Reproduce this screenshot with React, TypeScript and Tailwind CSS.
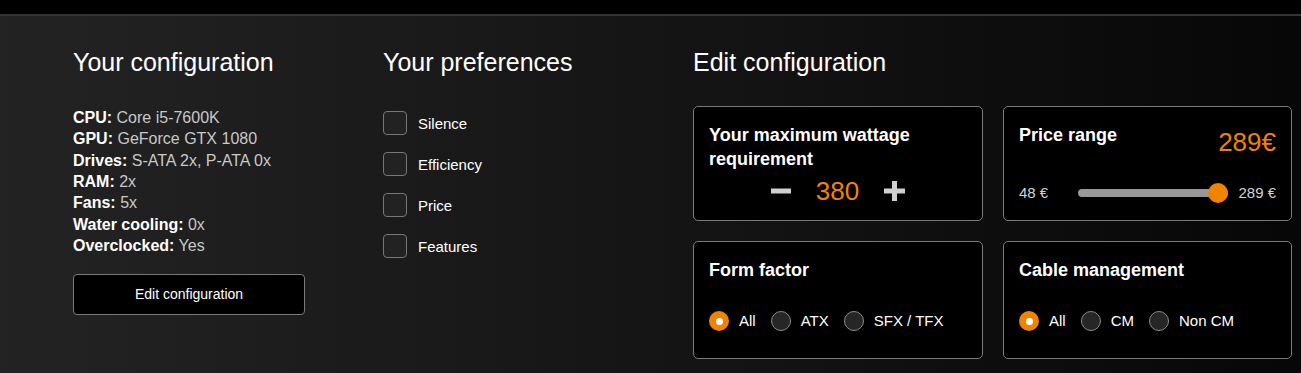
import React from "react";

const ORANGE = "#f08300";

function Radio({ checked }: { checked?: boolean }) {
  if (checked) {
    return (
      <span className="w-[20px] h-[20px] rounded-full bg-[#f08300] flex items-center justify-center shrink-0">
        <span className="w-[7px] h-[7px] rounded-full bg-white" />
      </span>
    );
  }
  return <span className="w-[20px] h-[20px] rounded-full bg-[#262626] border border-[#8a8a8a] shrink-0" />;
}

function RadioGroup({ options }: { options: string[] }) {
  return (
    <div className="flex items-center gap-[15px] h-[20px]">
      {options.map((o, i) => (
        <div key={o} className="flex items-center gap-[10px]">
          <Radio checked={i === 0} />
          <span className="text-[15px] leading-[20px] text-white">{o}</span>
        </div>
      ))}
    </div>
  );
}

export default function App() {
  const config: [string, string][] = [
    ["CPU:", "Core i5-7600K"],
    ["GPU:", "GeForce GTX 1080"],
    ["Drives:", "S-ATA 2x, P-ATA 0x"],
    ["RAM:", "2x"],
    ["Fans:", "5x"],
    ["Water cooling:", "0x"],
    ["Overclocked:", "Yes"],
  ];
  const prefs = ["Silence", "Efficiency", "Price", "Features"];

  return (
    <div className="min-h-[373px] w-full font-['Liberation_Sans',Arial,sans-serif] text-white bg-[linear-gradient(to_right,#232323,#070707)]">
      <div className="h-[14px] bg-black" />
      <div className="h-[2px] bg-[#333333]" />
      <div className="flex pl-[73px] pt-[32px]">
        {/* Left column */}
        <div className="w-[310px] shrink-0">
          <h2 className="text-[25px] leading-[28px] font-normal">Your configuration</h2>
          <ul className="mt-[31px] text-[16px] leading-[21.33px]">
            {config.map(([k, v]) => (
              <li key={k}>
                <span className="font-bold text-white">{k}</span>{" "}
                <span className="text-[#c8c8c8]">{v}</span>
              </li>
            ))}
          </ul>
          <button className="mt-[18px] w-[232px] h-[41px] bg-black border border-[#7a7a7a] rounded-[4px] text-[14px] text-white">
            Edit configuration
          </button>
        </div>

        {/* Middle column */}
        <div className="w-[310px] shrink-0">
          <h2 className="text-[25px] leading-[28px] font-normal">Your preferences</h2>
          <div className="mt-[35px] flex flex-col gap-[17px]">
            {prefs.map((p) => (
              <div key={p} className="flex items-center gap-[11px]">
                <span className="w-[24px] h-[24px] rounded-[4px] bg-[#222222] border border-[#777777] shrink-0" />
                <span className="text-[15px] leading-[24px] translate-y-[1px]">{p}</span>
              </div>
            ))}
          </div>
        </div>

        {/* Right column */}
        <div className="shrink-0">
          <h2 className="text-[25px] leading-[28px] font-normal">Edit configuration</h2>
          <div className="mt-[30px] grid grid-cols-[290px_289px] gap-x-[20px] gap-y-[20px]">
            {/* Wattage */}
            <div className="h-[115px] bg-black border border-[#7a7a7a] rounded-[5px] px-[15px] pt-[16px]">
              <div className="text-[18px] font-bold leading-[24px] pr-[20px]">Your maximum wattage requirement</div>
              <div className="flex items-center justify-center gap-[25px] h-[40px]">
                <svg width="20" height="20" viewBox="0 0 20 20">
                  <rect x="0" y="7.5" width="20" height="5" fill="#d0d0d0" />
                </svg>
                <span className="text-[26px] leading-[30px]" style={{ color: ORANGE }}>380</span>
                <svg width="21" height="20" viewBox="0 0 21 20">
                  <rect x="0" y="7.5" width="21" height="5" fill="#d0d0d0" />
                  <rect x="8" y="0" width="5" height="20" fill="#d0d0d0" />
                </svg>
              </div>
            </div>

            {/* Price range */}
            <div className="h-[115px] bg-black border border-[#7a7a7a] rounded-[5px] px-[15px] pt-[16px]">
              <div className="flex items-start justify-between">
                <div className="text-[18px] font-bold leading-[24px]">Price range</div>
                <div className="text-[26px] leading-[30px] mt-[4px]" style={{ color: ORANGE }}>289€</div>
              </div>
              <div className="mt-[26px] flex items-center h-[20px]">
                <span className="text-[15px] leading-[20px] text-[#d0d4d8] w-[31px]">48 €</span>
                <div className="relative flex-1 h-[20px] ml-[28px] mr-[10px] flex items-center">
                  <div className="w-full h-[8px] rounded-full bg-[#999999]" />
                  <span className="absolute right-0 top-0 w-[20px] h-[20px] rounded-full bg-[#f08300]" />
                </div>
                <span className="text-[15px] leading-[20px] text-[#d0d4d8]">289 €</span>
              </div>
            </div>

            {/* Form factor */}
            <div className="h-[118px] bg-black border border-[#7a7a7a] rounded-[5px] px-[15px] pt-[16px]">
              <div className="text-[18px] font-bold leading-[24px]">Form factor</div>
              <div className="mt-[29px]">
                <RadioGroup options={["All", "ATX", "SFX / TFX"]} />
              </div>
            </div>

            {/* Cable management */}
            <div className="h-[118px] bg-black border border-[#7a7a7a] rounded-[5px] px-[15px] pt-[16px]">
              <div className="text-[18px] font-bold leading-[24px]">Cable management</div>
              <div className="mt-[29px]">
                <RadioGroup options={["All", "CM", "Non CM"]} />
              </div>
            </div>
          </div>
        </div>
      </div>
    </div>
  );
}
